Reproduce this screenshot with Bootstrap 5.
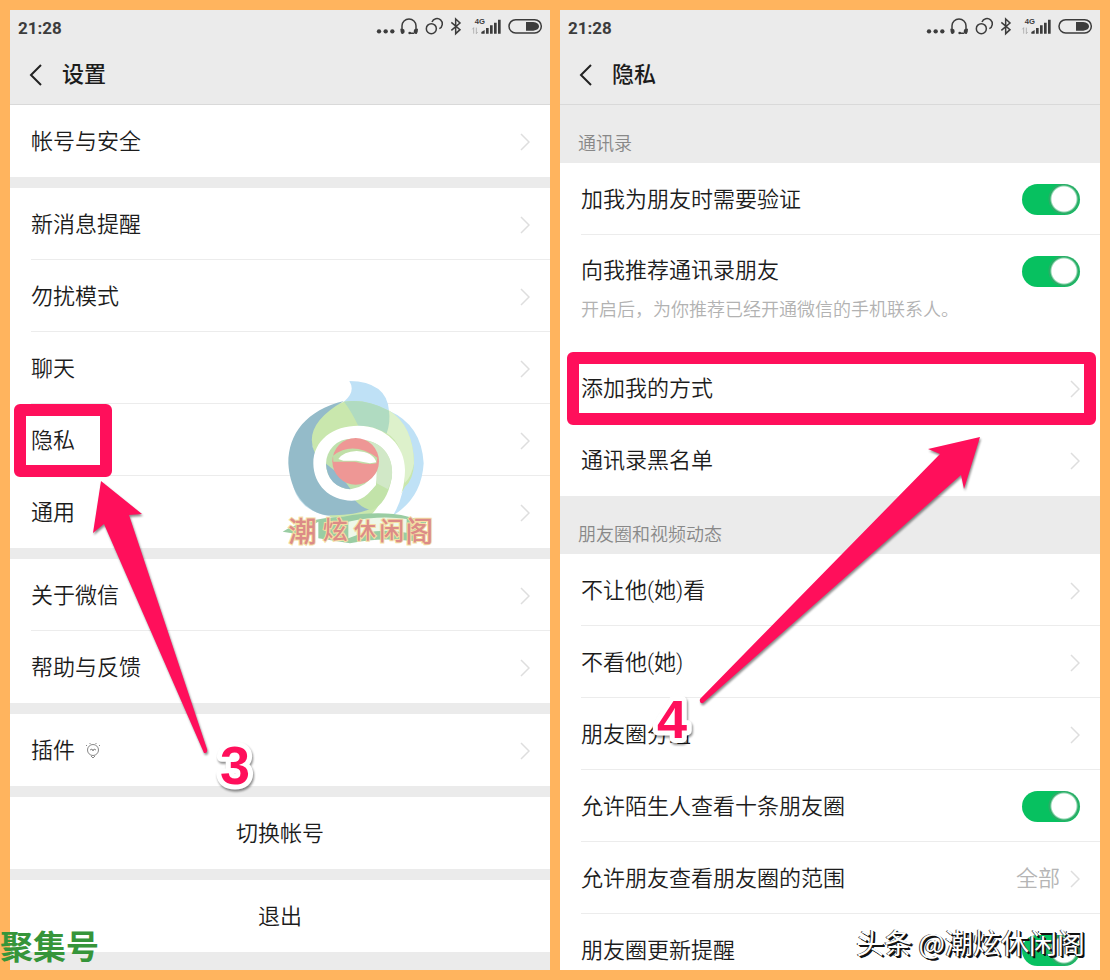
<!DOCTYPE html>
<html lang="zh-CN">
<head>
<meta charset="utf-8">
<meta name="viewport" content="width=device-width, initial-scale=1">
<title>设置 / 隐私</title>
<link rel="stylesheet" href="https://cdn.jsdelivr.net/npm/bootstrap@5.3.0/dist/css/bootstrap.min.css">
<script src="https://cdn.jsdelivr.net/npm/bootstrap@5.3.0/dist/js/bootstrap.bundle.min.js"></script>
<style>
  body { background: #ffb45e; color: #1c1c1c; font-family: Roboto, "Noto Sans CJK SC", sans-serif; font-size: 22px; line-height: 32px; font-weight: 350; }
  .board { height: 100vh; padding: 10px; gap: 10px; }
  .phone { background: #ebebeb; min-width: 0; }
  .status-bar { height: 35px; padding: 0 6px 0 8px; font-size: 17px; font-weight: 700; color: #3c3c3c; }
  .title-bar { height: 60px; padding: 1px 19px 0; gap: 20px; border-bottom: 1px solid #d9d9d9; }
  .title-bar h1 { font-size: 22px; line-height: 32px; font-weight: 500; }
  .group { background: #fff; }
  .group + .group { margin-top: 11px; }
  .entry { min-height: 72px; margin-left: 21px; padding: 2px 20px 0 0; gap: 10px; color: inherit; text-decoration: none; border-bottom: 1px solid #ececec; position: relative; }
  .entry.plain, .entry:last-child { border-bottom-color: transparent; }
  .entry-tall { padding: 20px 0 27px; }
  .entry-tall p { color: #b2b2b2; font-size: 18px; line-height: 28px; margin: 9px 0 0; }
  .entry-value { color: #b5b5b5; }
  .group-label { height: 58px; padding: 0 18px 5px; font-size: 18px; line-height: 28px; font-weight: 350; color: #888; margin: 0; }
  .action { height: 72px; border: 0; background: #fff; color: inherit; font-weight: 350; padding-top: 2px; }
  .form-check-input.toggle, .form-check-input.toggle:focus { width: 58px; height: 31px; margin: 0; border: 0; border-radius: 16px; box-shadow: none; flex: none;
    background: radial-gradient(circle at 42px 15px, #fff 12px, #2aae67 14px, #2aae67 15px, #07c160 16px); }
  .entry-tall .toggle { margin-right: 20px !important; }
  .marker { position: absolute; border: 12px solid #ff0f5b; border-radius: 6px; top: 0; bottom: -2px; }
  .marker-name { left: -17px; width: 98px; }
  .marker-line { left: -14px; right: 4px; }
  .overlay { position: absolute; left: 0; top: 0; pointer-events: none; filter: drop-shadow(1px 2px 1px rgba(0,0,0,.45)); }
  .overlay text { font: 700 54px "Liberation Sans", sans-serif; fill: #ff0f5b; stroke: #fff; stroke-width: 10px; stroke-linejoin: round; paint-order: stroke; }
  .emblem { position: absolute; left: 260px; top: 360px; pointer-events: none; }
  .site-tag { position: absolute; left: 0; bottom: 10px; font-size: 33px; line-height: 44px; font-weight: 700; color: #36953a; }
  .author-tag { position: absolute; right: 15px; bottom: 8px; font-family: "Noto Sans CJK SC", sans-serif; font-weight: 400; font-size: 28px; line-height: 40px; color: #fff; text-shadow: 2px 2px 0 #111, 1px 1px 0 #111, -1px 0 0 #444; white-space: nowrap; }
</style>
</head>
<body>
<svg class="d-none" aria-hidden="true">
  <symbol id="chev" viewBox="0 0 10 18"><path d="M1 1l8 8-8 8" fill="none" stroke="#dedede" stroke-width="1.5"/></symbol>
  <symbol id="back" viewBox="0 0 13 22"><path d="M12 1L2 11l10 10" fill="none" stroke="#222" stroke-width="2"/></symbol>
  <symbol id="indicators" viewBox="42 45 510 66">
    <g fill="#3c3c3c"><circle cx="57" cy="94" r="6.500"/><circle cx="77" cy="94" r="6.500"/><circle cx="97" cy="94" r="6.500"/>
      <path d="M121 86h7q6 0 6 8t-6 8h-3q-4-4-4-16zM174 86h-7q-6 0-6 8t6 8h3q4-4 4-16z"/><circle cx="149" cy="99" r="4"/></g>
    <g fill="none" stroke="#3c3c3c" stroke-width="4.500">
      <path d="M126 90V77a21 20 0 0 1 42 0v13M149 100h14"/>
      <circle cx="214" cy="86" r="15"/>
      <path d="M216 66a16 16 0 1 1 22 20"/>
      <path d="M274 67l26 22-13 12V57l13 12-26 22"/>
      <rect x="447" y="59" width="97" height="40" rx="20"/>
    </g>
    <path d="M498 66h22q17 2 17 13t-17 13h-22z" fill="#3c3c3c"/>
    <text x="344" y="71" font-family="Liberation Sans" font-weight="700" font-size="23" fill="#3c3c3c">4G</text>
    <path d="M341 101V83l-4 5M349 83v18l4-5" stroke="#999" stroke-width="2" fill="none"/>
    <path d="M364 96l10-6v11h-10zM378 84h8v17h-8zM390 76h8v25h-8zM402 68h8v33h-8zM414 59h8v42h-8z" fill="#3c3c3c"/>
  </symbol>
</svg>

<main class="board d-flex position-relative overflow-hidden">
  <section class="phone flex-fill w-50 position-relative overflow-hidden">
    <header>
      <div class="status-bar d-flex align-items-center justify-content-between"><span>21:28</span><svg width="170" height="22" class="mb-1"><use href="#indicators"/></svg></div>
      <div class="title-bar d-flex align-items-center"><a href="#" aria-label="返回" class="d-flex"><svg width="13" height="22"><use href="#back"/></svg></a><h1 class="m-0">设置</h1></div>
    </header>
    <nav class="group">
      <a href="#" class="entry d-flex align-items-center justify-content-between">帐号与安全<svg width="10" height="18"><use href="#chev"/></svg></a>
    </nav>
    <nav class="group">
      <a href="#" class="entry d-flex align-items-center justify-content-between">新消息提醒<svg width="10" height="18"><use href="#chev"/></svg></a>
      <a href="#" class="entry d-flex align-items-center justify-content-between">勿扰模式<svg width="10" height="18"><use href="#chev"/></svg></a>
      <a href="#" class="entry d-flex align-items-center justify-content-between">聊天<svg width="10" height="18"><use href="#chev"/></svg></a>
      <a href="#" class="entry d-flex align-items-center justify-content-between">隐私<svg width="10" height="18"><use href="#chev"/></svg><span class="marker marker-name"></span></a>
      <a href="#" class="entry d-flex align-items-center justify-content-between">通用<svg width="10" height="18"><use href="#chev"/></svg></a>
    </nav>
    <nav class="group">
      <a href="#" class="entry d-flex align-items-center justify-content-between">关于微信<svg width="10" height="18"><use href="#chev"/></svg></a>
      <a href="#" class="entry d-flex align-items-center justify-content-between">帮助与反馈<svg width="10" height="18"><use href="#chev"/></svg></a>
    </nav>
    <nav class="group">
      <a href="#" class="entry d-flex align-items-center">插件
        <svg width="16" height="18" viewBox="0 0 16 18" fill="none" stroke="#888"><circle cx="8" cy="8" r="5.500"/><path d="M5 8l2-1 1 2 1-2 2 1M6 14l2 2 2-2M1 3l1 1M15 3l-1 1M5 1v1M11 1v1"/></svg>
        <svg width="10" height="18" class="ms-auto"><use href="#chev"/></svg></a>
    </nav>
    <div class="group"><button type="button" class="action w-100">切换帐号</button></div>
    <div class="group"><button type="button" class="action w-100">退出</button></div>

    <svg class="emblem" width="180" height="190" viewBox="0 0 540 570" role="img" aria-label="潮炫休闲阁">
      <path d="M238 33Q350 35 357 122Q455 165 461 280Q455 385 368 437Q400 390 405 310Q390 180 265 168L222 95Q258 65 238 33z" fill="#bfe1f6"/>
      <path d="M70 350Q90 425 185 440L300 430L270 380z" fill="#bddce9"/>
      <path d="M222 95Q285 85 357 122Q430 170 432 280Q430 330 405 350L350 442L180 442L120 200Q125 130 222 95z" fill="#c9e7ad"/>
      <path d="M355 120Q430 165 432 280Q425 320 404 340Q405 220 350 190z" fill="#ddf1cb"/>
      <path d="M222 95Q290 85 357 122Q362 155 350 190Q305 165 265 168Q245 125 222 95z" fill="#b0dbc1"/>
      <path d="M222 93C110 120 55 190 55 280C60 370 110 425 165 435Q240 440 300 418Q265 405 250 385L135 250Q95 165 222 93z" fill="#94bbc9"/>
      <path d="M265 167C350 167 405 230 405 300C405 360 385 405 350 438H300Q340 400 330 370Q295 392 245 392C180 392 130 345 130 280C130 210 190 167 265 167z" fill="#fff"/>
      <path d="M285 210C350 222 372 275 365 325Q350 405 302 421Q270 410 258 392Q315 375 320 310z" fill="#c2e3a9"/>
      <path d="M295 213C350 225 372 275 365 325Q362 340 354 358L320 340z" fill="#d1e8c7"/>
      <ellipse cx="244" cy="282" rx="76" ry="76" fill="#bfe1ad"/>
      <path d="M168 281Q172 350 242 358Q215 315 168 281z" fill="#91b9cb"/>
      <path d="M242 358Q290 350 320 305L318 345Q290 385 235 375z" fill="#fff"/>
      <circle cx="257" cy="274" r="70" fill="#ee9795"/>
      <path d="M189 257Q248 211 322 263L319 280Q290 285 255 275L190 275z" fill="#c0dfa8"/>
      <path d="M205 267Q220 245 260 243Q310 246 319 277L300 280L280 276L260 272L220 272z" fill="#fff"/>
      <path d="M38 485Q100 445 220 440Q330 420 415 440L470 455L435 514Q330 500 240 520L145 505V455L80 492z" fill="#9acda3"/>
      <path d="M235 455Q330 435 410 447V488Q310 470 235 505z" fill="#eef8e9"/>
      <g font-family="Noto Sans CJK SC" font-weight="500" fill="#dc8b87" stroke="#f4dfa4" stroke-width="6" paint-order="stroke">
        <text x="55" y="515" font-size="85">潮</text>
        <text x="158" y="508" font-size="75">炫</text>
        <text x="252" y="504" font-size="66">休</text>
        <text x="328" y="509" font-size="75">闲</text>
        <text x="406" y="515" font-size="84">阁</text>
      </g>
    </svg>
    <svg class="overlay" width="540" height="960" viewBox="10 10 540 960">
      <path d="M101 481L142 514L129 515L207 749Q208 753 204 753L104 524L93 533z" fill="#ff0f5b"/>
      <text x="220" y="784">3</text>
    </svg>
  </section>

  <section class="phone flex-fill w-50 position-relative overflow-hidden">
    <header>
      <div class="status-bar d-flex align-items-center justify-content-between"><span>21:28</span><svg width="170" height="22" class="mb-1"><use href="#indicators"/></svg></div>
      <div class="title-bar d-flex align-items-center"><a href="#" aria-label="返回" class="d-flex"><svg width="13" height="22"><use href="#back"/></svg></a><h1 class="m-0">隐私</h1></div>
    </header>
    <h2 class="group-label d-flex align-items-end">通讯录</h2>
    <div class="group">
      <label class="entry d-flex align-items-center justify-content-between form-switch ps-0" for="verify">加我为朋友时需要验证<input class="form-check-input toggle" type="checkbox" role="switch" id="verify" checked></label>
      <div class="entry entry-tall plain">
        <div class="d-flex align-items-center justify-content-between form-switch ps-0"><label for="recommend">向我推荐通讯录朋友</label><input class="form-check-input toggle" type="checkbox" role="switch" id="recommend" checked></div>
        <p>开启后，为你推荐已经开通微信的手机联系人。</p>
      </div>
      <a href="#" class="entry plain d-flex align-items-center justify-content-between">添加我的方式<svg width="10" height="18"><use href="#chev"/></svg><span class="marker marker-line"></span></a>
      <a href="#" class="entry d-flex align-items-center justify-content-between">通讯录黑名单<svg width="10" height="18"><use href="#chev"/></svg></a>
    </div>
    <h2 class="group-label d-flex align-items-end">朋友圈和视频动态</h2>
    <div class="group">
      <a href="#" class="entry d-flex align-items-center justify-content-between">不让他(她)看<svg width="10" height="18"><use href="#chev"/></svg></a>
      <a href="#" class="entry d-flex align-items-center justify-content-between">不看他(她)<svg width="10" height="18"><use href="#chev"/></svg></a>
      <a href="#" class="entry d-flex align-items-center justify-content-between">朋友圈分组<svg width="10" height="18"><use href="#chev"/></svg></a>
      <label class="entry d-flex align-items-center justify-content-between form-switch ps-0" for="strangers">允许陌生人查看十条朋友圈<input class="form-check-input toggle" type="checkbox" role="switch" id="strangers" checked></label>
      <a href="#" class="entry d-flex align-items-center">允许朋友查看朋友圈的范围<span class="entry-value ms-auto">全部</span><svg width="10" height="18"><use href="#chev"/></svg></a>
      <label class="entry d-flex align-items-center justify-content-between form-switch ps-0" for="updates">朋友圈更新提醒<input class="form-check-input toggle" type="checkbox" role="switch" id="updates" checked></label>
    </div>
    <svg class="overlay" width="540" height="960" viewBox="560 10 540 960">
      <path d="M980 437L928 449L940 454L700 699Q699 704 703 703L961 475L964 489z" fill="#ff0f5b"/>
      <text x="657" y="738">4</text>
    </svg>
    <div class="author-tag">头条 @潮炫休闲阁</div>
  </section>
  <div class="site-tag">聚集号</div>
</main>
</body>
</html>
